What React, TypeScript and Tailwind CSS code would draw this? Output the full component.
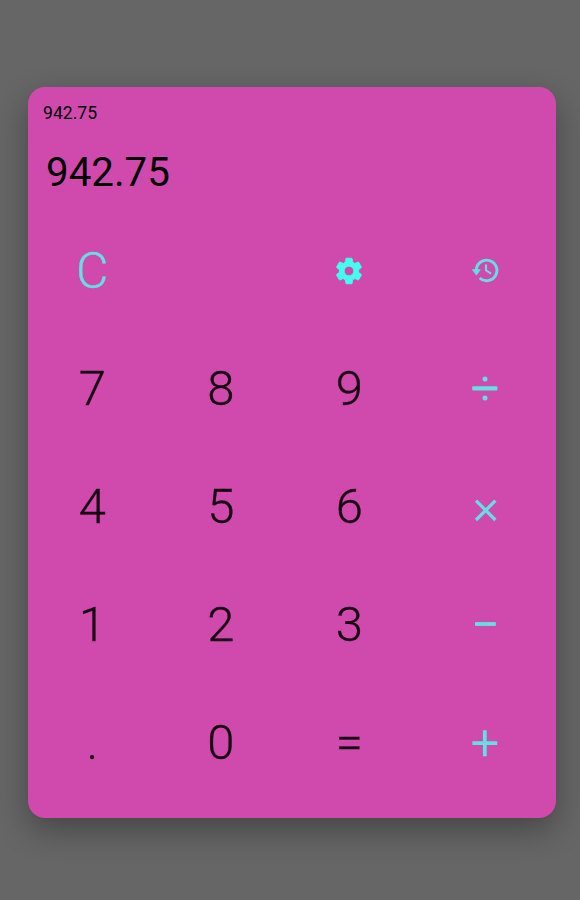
import React from "react";

const digit = "flex items-center justify-center pt-px font-light text-[49px] leading-none text-[#16000f] [-webkit-text-stroke:0.3px_currentColor]";
const operator = "flex items-center justify-center text-[#64dfe4]";

function GearIcon() {
  return (
    <svg width="32" height="32" viewBox="0 0 24 24" fill="currentColor" stroke="currentColor" strokeWidth="0.6" strokeLinejoin="round">
      <path d="M19.14 12.94c.04-.3.06-.61.06-.94 0-.32-.02-.64-.07-.94l2.03-1.58c.18-.14.23-.41.12-.61l-1.92-3.32c-.12-.22-.37-.29-.59-.22l-2.39.96c-.5-.38-1.03-.7-1.62-.94l-.36-2.54c-.04-.24-.24-.41-.48-.41h-3.84c-.24 0-.43.17-.47.41l-.36 2.54c-.59.24-1.13.57-1.62.94l-2.39-.96c-.22-.08-.47 0-.59.22L2.74 8.87c-.12.21-.08.47.12.61l2.03 1.58c-.05.3-.09.63-.09.94s.02.64.07.94l-2.03 1.58c-.18.14-.23.41-.12.61l1.92 3.32c.12.22.37.29.59.22l2.39-.96c.5.38 1.03.7 1.62.94l.36 2.54c.05.24.24.41.48.41h3.84c.24 0 .44-.17.47-.41l.36-2.54c.59-.24 1.13-.56 1.62-.94l2.39.96c.22.08.47 0 .59-.22l1.92-3.32c.12-.22.07-.47-.12-.61l-2.01-1.58zM12 15.6c-1.98 0-3.6-1.62-3.6-3.6s1.62-3.6 3.6-3.6 3.6 1.62 3.6 3.6-1.62 3.6-3.6 3.6z" />
    </svg>
  );
}

function HistoryIcon() {
  return (
    <svg width="32" height="32" viewBox="0 0 32 32" fill="none" stroke="currentColor" strokeWidth="2.9">
      <path d="M7.3 17V15.8A10.3 10.3 0 1 1 10.6 24" />
      <path d="M3.2 15.6H11.4L7.4 21.2Z" fill="currentColor" strokeWidth="0.6" strokeLinejoin="round" />
      <path d="M17 10.6V16.3L22 19.6" strokeWidth="2.1" />
    </svg>
  );
}

function Sign({ d, width = 3.5 }: { d: string; width?: number }) {
  return (
    <svg width="32" height="32" viewBox="0 0 32 32" fill="none" stroke="currentColor" strokeWidth={width}>
      <path d={d} />
    </svg>
  );
}

export default function App() {
  return (
    <main className="flex h-[900px] w-[580px] bg-[#666666] pt-[87px] pl-7 font-['Roboto',sans-serif]">
      <section className="flex h-[731px] w-[528px] flex-col rounded-[17px] bg-[#d04aae] shadow-[0_12px_32px_rgba(0,0,0,0.32)]">
        <header className="h-[124px] pt-4">
          <div className="pl-[15px] text-[17.6px] leading-5 text-black">942.75</div>
          <div className="mt-[26px] pl-[18px] text-[40.3px] leading-[48px] text-black">942.75</div>
        </header>
        <div className="grid grid-cols-[128.5px_128.5px_128.5px_142.5px] auto-rows-[118.1px]">
          <button className={`${digit} text-[50px]! text-[#64dfe4]!`}>C</button>
          <span />
          <button className="flex items-center justify-center pt-px text-[#42ffef]"><GearIcon /></button>
          <button className={operator}><HistoryIcon /></button>
          <button className={digit}>7</button>
          <button className={digit}>8</button>
          <button className={digit}>9</button>
          <button className={operator}>
            <svg width="32" height="32" viewBox="0 0 32 32" fill="currentColor">
              <rect x="3.2" y="14.2" width="25.2" height="4.2" rx="1" />
              <circle cx="16" cy="7" r="2.5" />
              <circle cx="16" cy="26" r="2.5" />
            </svg>
          </button>
          <button className={digit}>4</button>
          <button className={digit}>5</button>
          <button className={digit}>6</button>
          <button className={operator}><Sign d="M7 10.6L26.4 30M26.4 10.6L7 30" width={3.2} /></button>
          <button className={digit}>1</button>
          <button className={digit}>2</button>
          <button className={digit}>3</button>
          <button className={operator}><Sign d="M6 16H26.8" width={3.8} /></button>
          <button className={digit}>.</button>
          <button className={digit}>0</button>
          <button className={digit}>=</button>
          <button className={operator}><Sign d="M3.4 17.2H28.2M15.8 4.2V30.2" width={3.8} /></button>
        </div>
      </section>
    </main>
  );
}
